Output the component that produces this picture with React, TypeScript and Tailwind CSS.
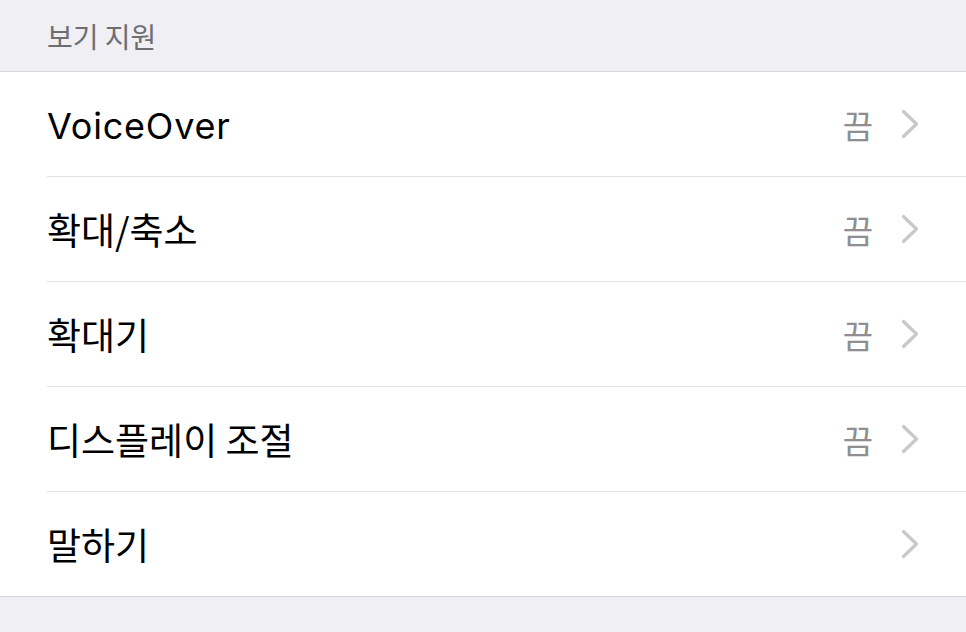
import React from 'react';

interface RowProps {
  label: string;
  value?: string;
  latin?: boolean;
  last?: boolean;
}

const Chevron = () => (
  <svg width="18" height="30" viewBox="0 0 18 30" fill="none">
    <path d="M2.5 2.5 L15.5 15 L2.5 27.5" stroke="#c7c7cc" strokeWidth="3.2" strokeLinecap="round" strokeLinejoin="round" />
  </svg>
);

const Row: React.FC<RowProps> = ({ label, value, latin, last }) => (
  <div className={last ? 'pl-[47px] bg-white border-b border-[#d6d6da]' : 'pl-[47px] bg-white'}>
    <div
      className={
        last
          ? 'flex items-center h-[104px] pr-[47px]'
          : 'flex items-center h-[105px] pr-[47px] border-b border-[#e2e2e5]'
      }
    >
      <span
        className={
          latin
            ? 'flex-1 pt-[3px] text-[36px] text-black font-[Inter,"Noto_Sans_CJK_KR",sans-serif] tracking-[0.8px]'
            : 'flex-1 pt-[2px] text-[37px] text-black font-["Noto_Sans_CJK_KR",sans-serif] tracking-[0px]'
        }
      >
        {label}
      </span>
      {value && (
        <span className="mr-[28px] pt-[3px] text-[33px] text-[#8e8e93] font-['Noto_Sans_CJK_KR',sans-serif]">{value}</span>
      )}
      <Chevron />
    </div>
  </div>
);

export default function App() {
  const rows: RowProps[] = [
    { label: 'VoiceOver', value: '끔', latin: true },
    { label: '확대/축소', value: '끔' },
    { label: '확대기', value: '끔' },
    { label: '디스플레이 조절', value: '끔' },
    { label: '말하기', last: true },
  ];

  return (
    <div className="w-[966px] h-[632px] bg-[#efeff4] overflow-hidden">
      <div className="h-[71px] flex items-center pl-[47px] text-[28px] text-[#6d6d72] tracking-[0px] font-['Noto_Sans_CJK_KR',sans-serif] border-b border-[#d6d6da] box-content">
        보기 지원
      </div>
      {rows.map((r) => (
        <Row key={r.label} {...r} />
      ))}
    </div>
  );
}
